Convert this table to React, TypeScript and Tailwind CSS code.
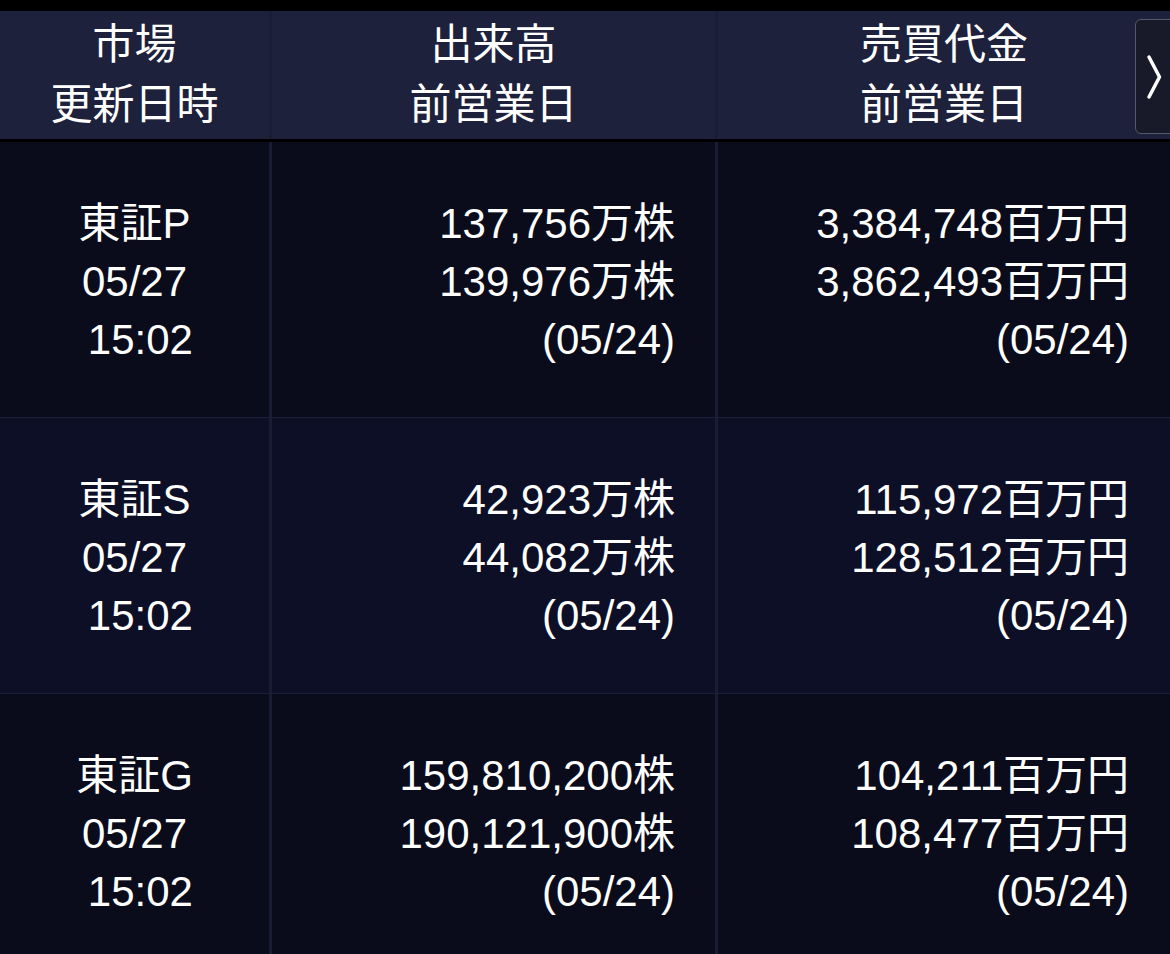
const rows = [
  {
    market: '東証P',
    volume: ['137,756万株', '139,976万株'],
    value: ['3,384,748百万円', '3,862,493百万円'],
    bg: 'bg-[#0a0c1b]',
  },
  {
    market: '東証S',
    volume: ['42,923万株', '44,082万株'],
    value: ['115,972百万円', '128,512百万円'],
    bg: 'bg-[#0d0f26]',
  },
  {
    market: '東証G',
    volume: ['159,810,200株', '190,121,900株'],
    value: ['104,211百万円', '108,477百万円'],
    bg: 'bg-[#0a0c1b]',
  },
];

export default function App() {
  return (
    <div className="w-[1170px] h-[954px] overflow-hidden bg-black text-white font-['Liberation_Sans','Noto_Sans_CJK_JP',sans-serif] text-[42px] leading-[58px]">
      <div className="h-[11px] bg-black" />

      {/* header */}
      <div className="relative grid grid-cols-[272px_446px_1fr] h-[128px] bg-[#1e213c] leading-[60px]">
        <div className="flex flex-col items-center justify-center border-r-[3px] border-[#1a1d36]">
          <span>市場</span>
          <span>更新日時</span>
        </div>
        <div className="flex flex-col items-center justify-center border-r-[3px] border-[#1a1d36]">
          <span>出来高</span>
          <span>前営業日</span>
        </div>
        <div className="flex flex-col items-center justify-center">
          <span>売買代金</span>
          <span>前営業日</span>
        </div>
        <button className="absolute right-[-8px] top-[8px] w-[43px] h-[115px] rounded-[6px] border border-[#55576a] bg-[#181a29] flex items-center pl-[10px]">
          <svg width="16" height="46" viewBox="0 0 16 46" fill="none">
            <polyline points="3,3 13.5,23 3,43" stroke="white" strokeWidth="3.5" strokeLinecap="round" strokeLinejoin="round" />
          </svg>
        </button>
      </div>
      <div className="h-[3px] bg-black" />

      {/* rows */}
      {rows.map((r) => (
        <div key={r.market} className={`grid grid-cols-[272px_446px_1fr] h-[276px] border-b border-[#1c1e3a] ${r.bg}`}>
          <div className="flex flex-col items-center justify-center pt-[4px] border-r-[3px] border-[#191c34]">
            <span>{r.market}</span>
            <span>05/27</span>
            <span>{'\u00a015:02'}</span>
          </div>
          <div className="flex flex-col items-end justify-center pt-[4px] pr-[40px] border-r-[3px] border-[#191c34]">
            <span>{r.volume[0]}</span>
            <span>{r.volume[1]}</span>
            <span>(05/24)</span>
          </div>
          <div className="flex flex-col items-end justify-center pt-[4px] pr-[41px]">
            <span>{r.value[0]}</span>
            <span>{r.value[1]}</span>
            <span>(05/24)</span>
          </div>
        </div>
      ))}
    </div>
  );
}
